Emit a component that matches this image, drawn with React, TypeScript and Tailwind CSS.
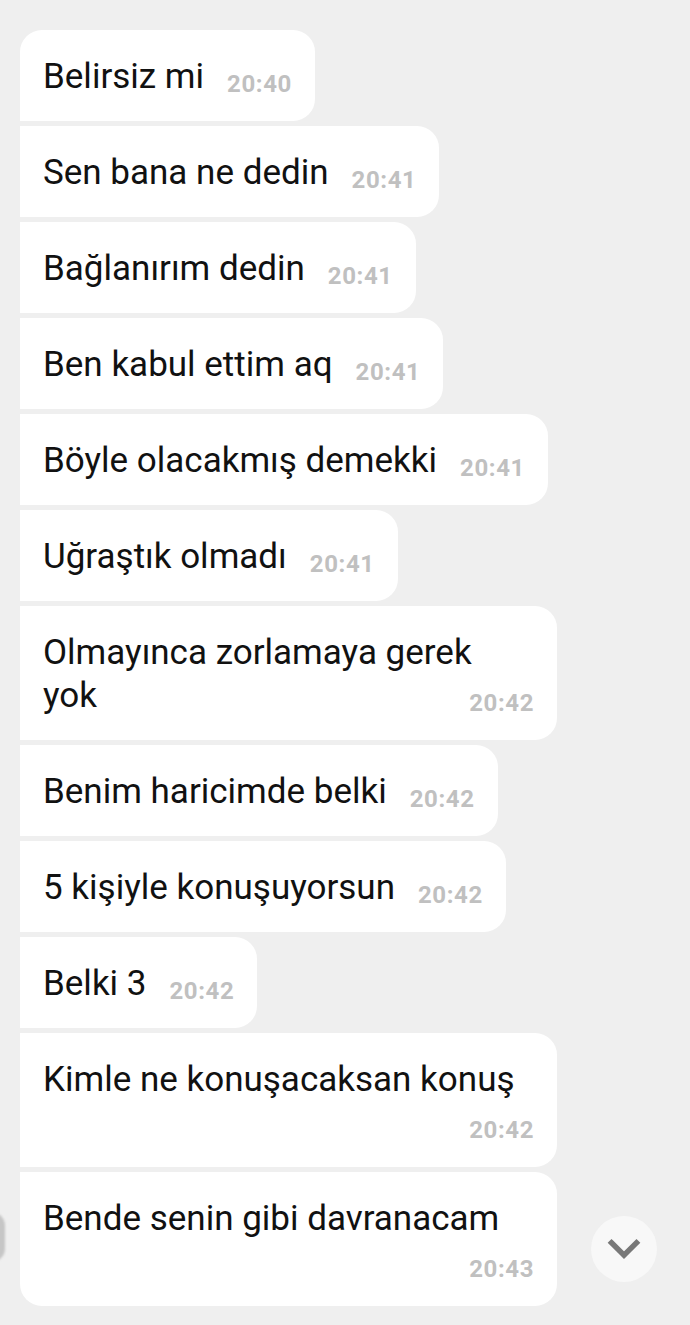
import { ChevronDown } from "lucide-react";

/* ---------------- TYPES ---------------- */

interface Message {
  id: number;
  lines: string[];
  time: string;
  // inline: time next to the text, wrap: time at the end of the last line, below: time on its own row
  layout: "inline" | "wrap" | "below";
}

const messages: Message[] = [
  { id: 1, lines: ["Belirsiz mi"], time: "20:40", layout: "inline" },
  { id: 2, lines: ["Sen bana ne dedin"], time: "20:41", layout: "inline" },
  { id: 3, lines: ["Bağlanırım dedin"], time: "20:41", layout: "inline" },
  { id: 4, lines: ["Ben kabul ettim aq"], time: "20:41", layout: "inline" },
  { id: 5, lines: ["Böyle olacakmış demekki"], time: "20:41", layout: "inline" },
  { id: 6, lines: ["Uğraştık olmadı"], time: "20:41", layout: "inline" },
  { id: 7, lines: ["Olmayınca zorlamaya gerek", "yok"], time: "20:42", layout: "wrap" },
  { id: 8, lines: ["Benim haricimde belki"], time: "20:42", layout: "inline" },
  { id: 9, lines: ["5 kişiyle konuşuyorsun"], time: "20:42", layout: "inline" },
  { id: 10, lines: ["Belki 3"], time: "20:42", layout: "inline" },
  { id: 11, lines: ["Kimle ne konuşacaksan konuş"], time: "20:42", layout: "below" },
  { id: 12, lines: ["Bende senin gibi davranacam"], time: "20:43", layout: "below" },
];

const Time = ({ value }: { value: string }) => (
  <span className="text-[24px] leading-none font-bold text-[#c0c0c0] translate-y-[4px] tracking-[0.6px]">
    {value}
  </span>
);

/* ---------------- BUBBLE ---------------- */
const Bubble = ({ msg, first, last }: { msg: Message; first: boolean; last: boolean }) => {
  const corners = [
    "rounded-r-[22px]",
    first ? "rounded-tl-[22px]" : "",
    last ? "rounded-bl-[22px]" : "",
  ].join(" ");

  return (
    <div className={`bg-white px-[23px] pt-[25px] pb-[23px] text-[35px] leading-[43px] text-[#111] ${corners} ${msg.layout === "inline" ? "self-start" : "w-[537px]"}`}>
      {msg.layout === "inline" && (
        <div className="flex items-baseline gap-[23px]">
          <span>{msg.lines[0]}</span>
          <Time value={msg.time} />
        </div>
      )}

      {msg.layout === "wrap" && (
        <>
          <div>{msg.lines[0]}</div>
          <div className="flex items-baseline justify-between">
            <span>{msg.lines[1]}</span>
            <Time value={msg.time} />
          </div>
        </>
      )}

      {msg.layout === "below" && (
        <>
          <div>{msg.lines[0]}</div>
          <div className="flex h-[43px] items-end justify-end pb-[6px]">
            <Time value={msg.time} />
          </div>
        </>
      )}
    </div>
  );
};

/* ---------------- APP ---------------- */
export default function App() {
  return (
    <div
      className="relative min-h-screen w-[690px] overflow-hidden bg-[#efefef] pt-[30px] pb-5 pl-5"
      style={{ fontFamily: "Roboto, 'Noto Sans', sans-serif" }}
    >
      <div className="flex flex-col gap-[5px]">
        {messages.map((m, i) => (
          <Bubble key={m.id} msg={m} first={i === 0} last={i === messages.length - 1} />
        ))}
      </div>

      {/* avatar peeking at the left edge */}
      <div className="absolute left-[-22px] top-[1212px] h-[50px] w-[27px] rounded-full bg-[#c6c6c6] blur-[1px]" />

      {/* scroll to bottom */}
      <button className="absolute left-[591px] top-[1216px] flex h-[66px] w-[66px] items-center justify-center rounded-full bg-[#f8f8f8]">
        <ChevronDown size={50} strokeWidth={2.6} className="text-[#787878]" strokeLinecap="square" strokeLinejoin="miter" />
      </button>
    </div>
  );
}
